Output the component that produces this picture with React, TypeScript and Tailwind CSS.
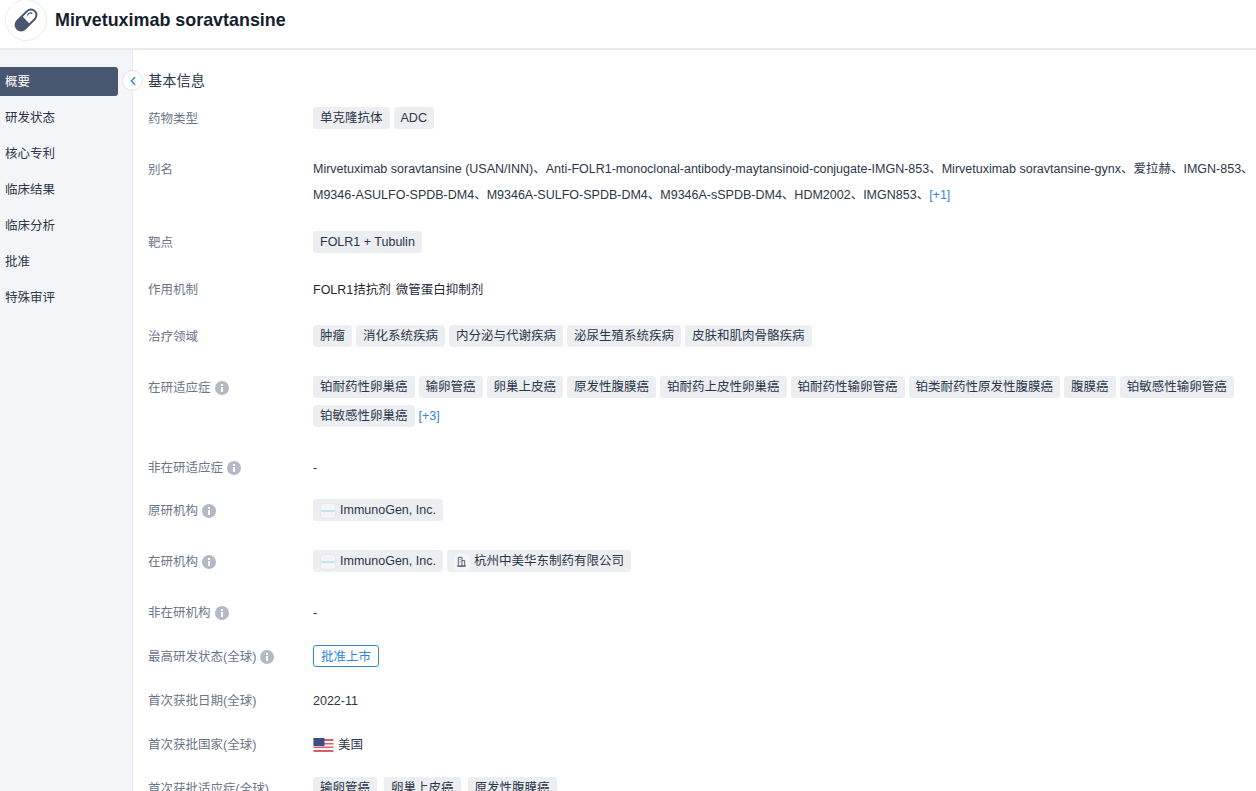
import { ChevronLeft } from 'lucide-react';
import type { ReactNode } from 'react';

const navItems = ['概要', '研发状态', '核心专利', '临床结果', '临床分析', '批准', '特殊审评'];

const Info = () => (
  <svg viewBox="0 0 14 14" className="ml-[4px] h-[14px] w-[14px] shrink-0">
    <circle cx="7" cy="7" r="7" fill="#b4b9c6" />
    <rect x="6" y="6" width="2" height="5" fill="#fff" />
    <rect x="6" y="3" width="2" height="2" fill="#fff" />
  </svg>
);

const Tag = ({ children }: { children: ReactNode }) => (
  <span className="flex h-[22px] items-center whitespace-nowrap rounded-[3px] bg-[#eceef2] px-[7px] pt-[1px] text-[12.5px] text-[#2b3648]">
    {children}
  </span>
);

const OrgLogo = () => (
  <span className="mr-[4px] flex h-[16px] w-[16px] items-center justify-center rounded-[3px] border border-[#e6e8ed] bg-[#f4f5f7]">
    <span className="h-[2px] w-[14px] bg-[#c3e6e8]" />
  </span>
);

const Row = ({ label, info, tall, className, children }: { label: string; info?: boolean; tall?: boolean; className: string; children: ReactNode }) => (
  <div className={`flex items-start ${className}`}>
    <div className={`flex w-[165px] shrink-0 items-center pt-[2px] text-[12.5px] text-[#6b7688] ${tall ? 'h-[26px]' : 'h-[22px]'}`}>
      {label}
      {info && <Info />}
    </div>
    <div className="flex min-w-0 flex-1 text-[12.5px] text-[#2b3648]">{children}</div>
  </div>
);

const Tags = ({ items, className = 'gap-[4px]' }: { items: string[]; className?: string }) => (
  <div className={`flex ${className}`}>
    {items.map((t) => (
      <Tag key={t}>{t}</Tag>
    ))}
  </div>
);

const App = () => {
  return (
    <div className="h-[791px] w-[1256px] overflow-hidden bg-white font-['Liberation_Sans','Noto_Sans_CJK_SC',sans-serif]">
      {/* Header */}
      <header className="flex h-[50px] items-center border-b-2 border-[#e8eaee] pb-[8px] pl-[5px]">
        <div className="flex h-[42px] w-[42px] shrink-0 items-center justify-center rounded-full border border-[#e8eaee]">
          <svg viewBox="0 0 30 30" className="h-[30px] w-[30px]">
            <g transform="rotate(45 15 15)">
              <rect x="9.5" y="2.5" width="11" height="25" rx="5.5" fill="none" stroke="#48566f" strokeWidth="2" />
              <path d="M9.5 15v7a5.5 5.5 0 0 0 11 0v-7Z" fill="#48566f" />
              <path d="M12.5 11V8.5a2.5 2.5 0 0 1 2.5-2.5" fill="none" stroke="#48566f" strokeWidth="1.2" />
            </g>
          </svg>
        </div>
        <h1 className="ml-[8px] text-[17.9px] font-bold text-[#151e2d]">Mirvetuximab soravtansine</h1>
      </header>

      <div className="flex h-[741px]">
        {/* Sidebar */}
        <nav className="relative w-[133px] shrink-0 border-r border-[#e8eaee] bg-[#f3f5f8] pt-[17px]">
          <ul>
            {navItems.map((item, i) => (
              <li
                key={item}
                className={
                  i === 0
                    ? 'mb-[7px] flex h-[29px] w-[118px] items-center rounded-r-[3px] bg-[#48566f] pl-[5px] pt-[2px] text-[12.5px] text-white'
                    : 'mb-[7px] flex h-[29px] items-center pl-[5px] pt-[2px] text-[12.5px] text-[#2b3648]'
                }
              >
                {item}
              </li>
            ))}
          </ul>
          <button className="absolute right-[-11px] top-[20px] flex h-[21px] w-[21px] items-center justify-center rounded-full border border-[#dfe2e8] bg-white text-[#2f86e0]">
            <ChevronLeft size={14} strokeWidth={2.4} />
          </button>
        </nav>

        {/* Main content */}
        <main className="min-w-0 flex-1 pl-[15px] pt-[21px]">
          <h2 className="mb-[15px] h-[21px] text-[14.25px] leading-[21px] text-[#2b3648]">基本信息</h2>

          <Row label="药物类型" className="mb-[27px]">
            <Tags items={['单克隆抗体', 'ADC']} />
          </Row>

          <Row label="别名" tall className="mb-[23px]">
            <div className="whitespace-nowrap text-[12.5px] leading-[26px]">
              <div>Mirvetuximab soravtansine (USAN/INN)、Anti-FOLR1-monoclonal-antibody-maytansinoid-conjugate-IMGN-853、Mirvetuximab soravtansine-gynx、爱拉赫、IMGN-853、</div>
              <div>
                M9346-ASULFO-SPDB-DM4、M9346A-SULFO-SPDB-DM4、M9346A-sSPDB-DM4、HDM2002、IMGN853、<span className="text-[#2f86e0]">[+1]</span>
              </div>
            </div>
          </Row>

          <Row label="靶点" className="mb-[25px]">
            <Tags items={['FOLR1 + Tubulin']} />
          </Row>

          <Row label="作用机制" className="mb-[25px]">
            <div className="flex h-[22px] gap-[5px] pt-[2px] leading-[20px] text-[#1f2937]">
              <span>FOLR1拮抗剂</span>
              <span>微管蛋白抑制剂</span>
            </div>
          </Row>

          <Row label="治疗领域" className="mb-[29px]">
            <Tags items={['肿瘤', '消化系统疾病', '内分泌与代谢疾病', '泌尿生殖系统疾病', '皮肤和肌肉骨骼疾病']} />
          </Row>

          <Row label="在研适应症" info className="mb-[29px]">
            <div className="flex flex-col gap-[7px]">
              <Tags items={['铂耐药性卵巢癌', '输卵管癌', '卵巢上皮癌', '原发性腹膜癌', '铂耐药上皮性卵巢癌', '铂耐药性输卵管癌', '铂类耐药性原发性腹膜癌', '腹膜癌', '铂敏感性输卵管癌']} />
              <div className="flex items-center gap-[4px]">
                <Tag>铂敏感性卵巢癌</Tag>
                <span className="text-[#2f86e0]">[+3]</span>
              </div>
            </div>
          </Row>

          <Row label="非在研适应症" info className="mb-[21px]">
            <div className="h-[22px] pt-[2px] leading-[20px]">-</div>
          </Row>

          <Row label="原研机构" info className="mb-[29px]">
            <Tag>
              <OrgLogo />
              ImmunoGen, Inc.
            </Tag>
          </Row>

          <Row label="在研机构" info className="mb-[29px]">
            <div className="flex gap-[4px]">
              <Tag>
                <OrgLogo />
                ImmunoGen, Inc.
              </Tag>
              <Tag>
                <span className="mr-[4px] flex h-[16px] w-[16px] items-center justify-center rounded-[3px] bg-[#f4f5f7]">
                  <svg viewBox="0 0 12 12" className="h-[11px] w-[11px]" fill="none" stroke="#48566f" strokeWidth="1">
                    <path d="M2.5 11V1.5h4V11ZM6.5 5h3V11h-3M1 11h10M4 4h1M4 6.5h1" />
                  </svg>
                </span>
                杭州中美华东制药有限公司
              </Tag>
            </div>
          </Row>

          <Row label="非在研机构" info className="mb-[22px]">
            <div className="h-[22px] pt-[2px] leading-[20px]">-</div>
          </Row>

          <Row label="最高研发状态(全球)" info className="mb-[22px]">
            <span className="flex h-[22px] items-center rounded-[3px] border border-[#2f86e0] px-[7px] pt-[2px] text-[#2f86e0]">
              批准上市
            </span>
          </Row>

          <Row label="首次获批日期(全球)" className="mb-[22px]">
            <div className="h-[22px] pt-[2px] leading-[20px]">2022-11</div>
          </Row>

          <Row label="首次获批国家(全球)" className="mb-[22px]">
            <div className="flex h-[22px] items-center pt-[2px]">
              <svg viewBox="0 0 20 15" className="mr-[4px] h-[15px] w-[21px]">
                <rect width="20" height="15" fill="#fff" />
                <path d="M0 1h20v2H0ZM0 5h20v1.5H0ZM0 8.5h20V10H0ZM0 12h20v2H0Z" fill="#d9606a" />
                <rect width="11" height="8" fill="#3c4f84" />
              </svg>
              美国
            </div>
          </Row>

          <Row label="首次获批适应症(全球)" className="">
            <Tags items={['输卵管癌', '卵巢上皮癌', '原发性腹膜癌']} className="gap-[7px]" />
          </Row>
        </main>
      </div>
    </div>
  );
};

export default App;
